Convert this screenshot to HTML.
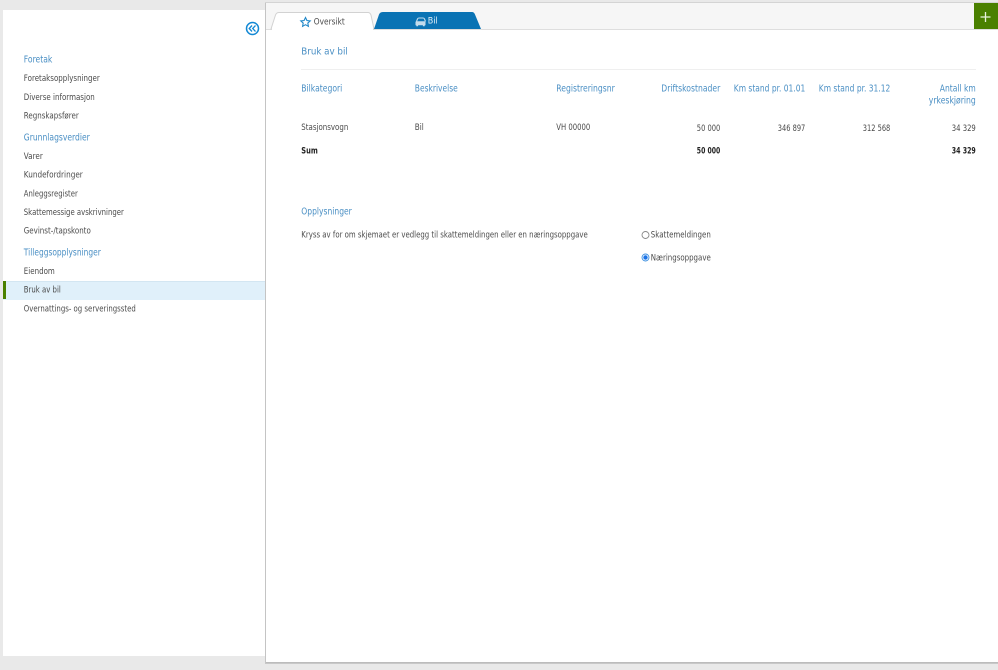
<!DOCTYPE html>
<html><head><meta charset="utf-8"><title>Bruk av bil</title>
<style>
html,body{margin:0;padding:0;background:#e9e9e9;width:998px;height:670px;overflow:hidden}
svg{position:absolute;left:0;top:0;display:block}
text{font-family:"DejaVu Sans","Liberation Sans",sans-serif;font-size:8.8px;fill:#4a4a4a;filter:blur(0.2px)}
.h{fill:#4a8fc4;font-size:9.8px}
.c{fill:#4a8fc4;font-size:9.3px}
.b{font-weight:bold;fill:#222;font-size:8.5px}
</style></head><body>
<svg width="998" height="670" viewBox="0 0 998 670" xmlns="http://www.w3.org/2000/svg">
<rect width="998" height="670" fill="#e9e9e9"/>
<rect x="3" y="10" width="263" height="646" fill="#fff"/>
<rect x="3" y="281" width="263" height="19" fill="#e0f0fa"/>
<rect x="3" y="281" width="263" height="1" fill="#d3e6f2"/>
<rect x="3" y="281" width="3" height="18" fill="#4a8000"/>
<rect x="265" y="2" width="733" height="662" fill="#d4d4d4"/>
<rect x="265" y="662" width="733" height="1.500" fill="#bcbcbc"/>
<rect x="265" y="3" width="1" height="660" fill="#c4c4c4"/>
<rect x="266" y="3" width="732" height="659" fill="#fff"/>
<rect x="266" y="3" width="732" height="26" fill="#f6f6f6"/>
<rect x="266" y="29" width="732" height="1" fill="#dedede"/>
<rect x="974" y="3" width="24" height="26" fill="#4a8000"/>
<path d="M985.500 12v10M980.500 17h10" stroke="#e8f2dc" stroke-width="1.300" fill="none"/>
<path d="M271 29 L275.500 15 Q276.500 12.500 279 12.500 L368 12.500 Q370 12.500 371 15 L374 29 Z" fill="#fff" stroke="#d2d2d2"/>
<rect x="272" y="28.500" width="101" height="2" fill="#fff"/>
<path d="M374 29 L379 14.500 Q380 12 383 12 L472 12 Q474 12 475 14.500 L481 29 Z" fill="#0a73b4"/>
<path d="M305.500 17.500l1.400 3 3.300.4-2.400 2.200.6 3.200-2.900-1.600-2.900 1.600.6-3.200-2.400-2.200 3.300-.4z" fill="none" stroke="#1f87c8" stroke-width="1.100"/>
<path d="M416.500 21.500l1-2.500q.4-1 1.400-1h4.200q1 0 1.400 1l1 2.500" fill="none" stroke="#c4dcec" stroke-width="1.100"/>
<path d="M415.500 22q0-.8 1-.8h8q1 0 1 .8v3.300h-.8v1h-1.800v-1h-4.800v1h-1.800v-1h-.8z" fill="#c4dcec"/>
<circle cx="252.500" cy="28.500" r="6" fill="none" stroke="#1288d4" stroke-width="1.500"/>
<path d="M252 25.500l-2.800 3 2.800 3M255.500 25.500l-2.800 3 2.800 3" fill="none" stroke="#1288d4" stroke-width="1.300"/>
<g transform="translate(-0.2,-0.4)">
<text x="314" y="25" textLength="31" lengthAdjust="spacingAndGlyphs">Oversikt</text>
<text x="428" y="24" textLength="10" lengthAdjust="spacingAndGlyphs" style="fill:#e4f0f8">Bil</text>

<text class="h" x="24" y="63" textLength="28.500" lengthAdjust="spacingAndGlyphs">Foretak</text>
<text x="24" y="81.300" textLength="76" lengthAdjust="spacingAndGlyphs">Foretaksopplysninger</text>
<text x="24" y="100.300" textLength="71" lengthAdjust="spacingAndGlyphs">Diverse informasjon</text>
<text x="24" y="119" textLength="55" lengthAdjust="spacingAndGlyphs">Regnskapsfører</text>
<text class="h" x="24" y="141" textLength="66" lengthAdjust="spacingAndGlyphs">Grunnlagsverdier</text>
<text x="24" y="159.300" textLength="19" lengthAdjust="spacingAndGlyphs">Varer</text>
<text x="24" y="178" textLength="59" lengthAdjust="spacingAndGlyphs">Kundefordringer</text>
<text x="24" y="196.800" textLength="54" lengthAdjust="spacingAndGlyphs">Anleggsregister</text>
<text x="24" y="215.500" textLength="100" lengthAdjust="spacingAndGlyphs">Skattemessige avskrivninger</text>
<text x="24" y="234" textLength="67" lengthAdjust="spacingAndGlyphs">Gevinst-/tapskonto</text>
<text class="h" x="24" y="256" textLength="77" lengthAdjust="spacingAndGlyphs">Tilleggsopplysninger</text>
<text x="24" y="274.500" textLength="31" lengthAdjust="spacingAndGlyphs">Eiendom</text>
<text x="24" y="293" textLength="37" lengthAdjust="spacingAndGlyphs">Bruk av bil</text>
<text x="24" y="312" textLength="112" lengthAdjust="spacingAndGlyphs">Overnattings- og serveringssted</text>

<text class="h" x="301.500" y="55" textLength="46.500" lengthAdjust="spacingAndGlyphs">Bruk av bil</text>

<text class="c" x="301.500" y="92" textLength="41" lengthAdjust="spacingAndGlyphs">Bilkategori</text>
<text class="c" x="415" y="92" textLength="43" lengthAdjust="spacingAndGlyphs">Beskrivelse</text>
<text class="c" x="556.500" y="92" textLength="58.500" lengthAdjust="spacingAndGlyphs">Registreringsnr</text>
<text class="c" x="661.500" y="92" textLength="59" lengthAdjust="spacingAndGlyphs">Driftskostnader</text>
<text class="c" x="734" y="92" textLength="71.500" lengthAdjust="spacingAndGlyphs">Km stand pr. 01.01</text>
<text class="c" x="819" y="92" textLength="71.500" lengthAdjust="spacingAndGlyphs">Km stand pr. 31.12</text>
<text class="c" x="940" y="92" textLength="36" lengthAdjust="spacingAndGlyphs">Antall km</text>
<text class="c" x="929" y="104" textLength="47" lengthAdjust="spacingAndGlyphs">yrkeskjøring</text>

<text x="301.500" y="130.300" textLength="47" lengthAdjust="spacingAndGlyphs">Stasjonsvogn</text>
<text x="415" y="130.300" textLength="9" lengthAdjust="spacingAndGlyphs">Bil</text>
<text x="556.500" y="130.300" textLength="34" lengthAdjust="spacingAndGlyphs">VH 00000</text>
<text x="697" y="131.500" textLength="23.500" lengthAdjust="spacingAndGlyphs">50 000</text>
<text x="778" y="131.500" textLength="27.500" lengthAdjust="spacingAndGlyphs">346 897</text>
<text x="863" y="131.500" textLength="27.500" lengthAdjust="spacingAndGlyphs">312 568</text>
<text x="952" y="131.500" textLength="24" lengthAdjust="spacingAndGlyphs">34 329</text>

<text class="b" x="301.500" y="154" textLength="16.500" lengthAdjust="spacingAndGlyphs">Sum</text>
<text class="b" x="697" y="154" textLength="23.500" lengthAdjust="spacingAndGlyphs">50 000</text>
<text class="b" x="952" y="154" textLength="24" lengthAdjust="spacingAndGlyphs">34 329</text>

<text class="h" x="301.500" y="215" textLength="50.500" lengthAdjust="spacingAndGlyphs">Opplysninger</text>
<text x="301.500" y="238" textLength="286.500" lengthAdjust="spacingAndGlyphs">Kryss av for om skjemaet er vedlegg til skattemeldingen eller en næringsoppgave</text>
<text x="651" y="238" textLength="60" lengthAdjust="spacingAndGlyphs">Skattemeldingen</text>
<text x="651" y="261" textLength="60" lengthAdjust="spacingAndGlyphs">Næringsoppgave</text>
</g>
<rect x="301" y="69" width="675" height="1" fill="#efefef"/>
<circle cx="645.500" cy="235" r="3.500" fill="#fff" stroke="#888" stroke-width="0.900"/>
<circle cx="645.500" cy="257.500" r="3.500" fill="#fff" stroke="#3d8fe0" stroke-width="0.900"/>
<circle cx="645.500" cy="257.500" r="2.200" fill="#1a73e8"/>
</svg>
</body></html>
